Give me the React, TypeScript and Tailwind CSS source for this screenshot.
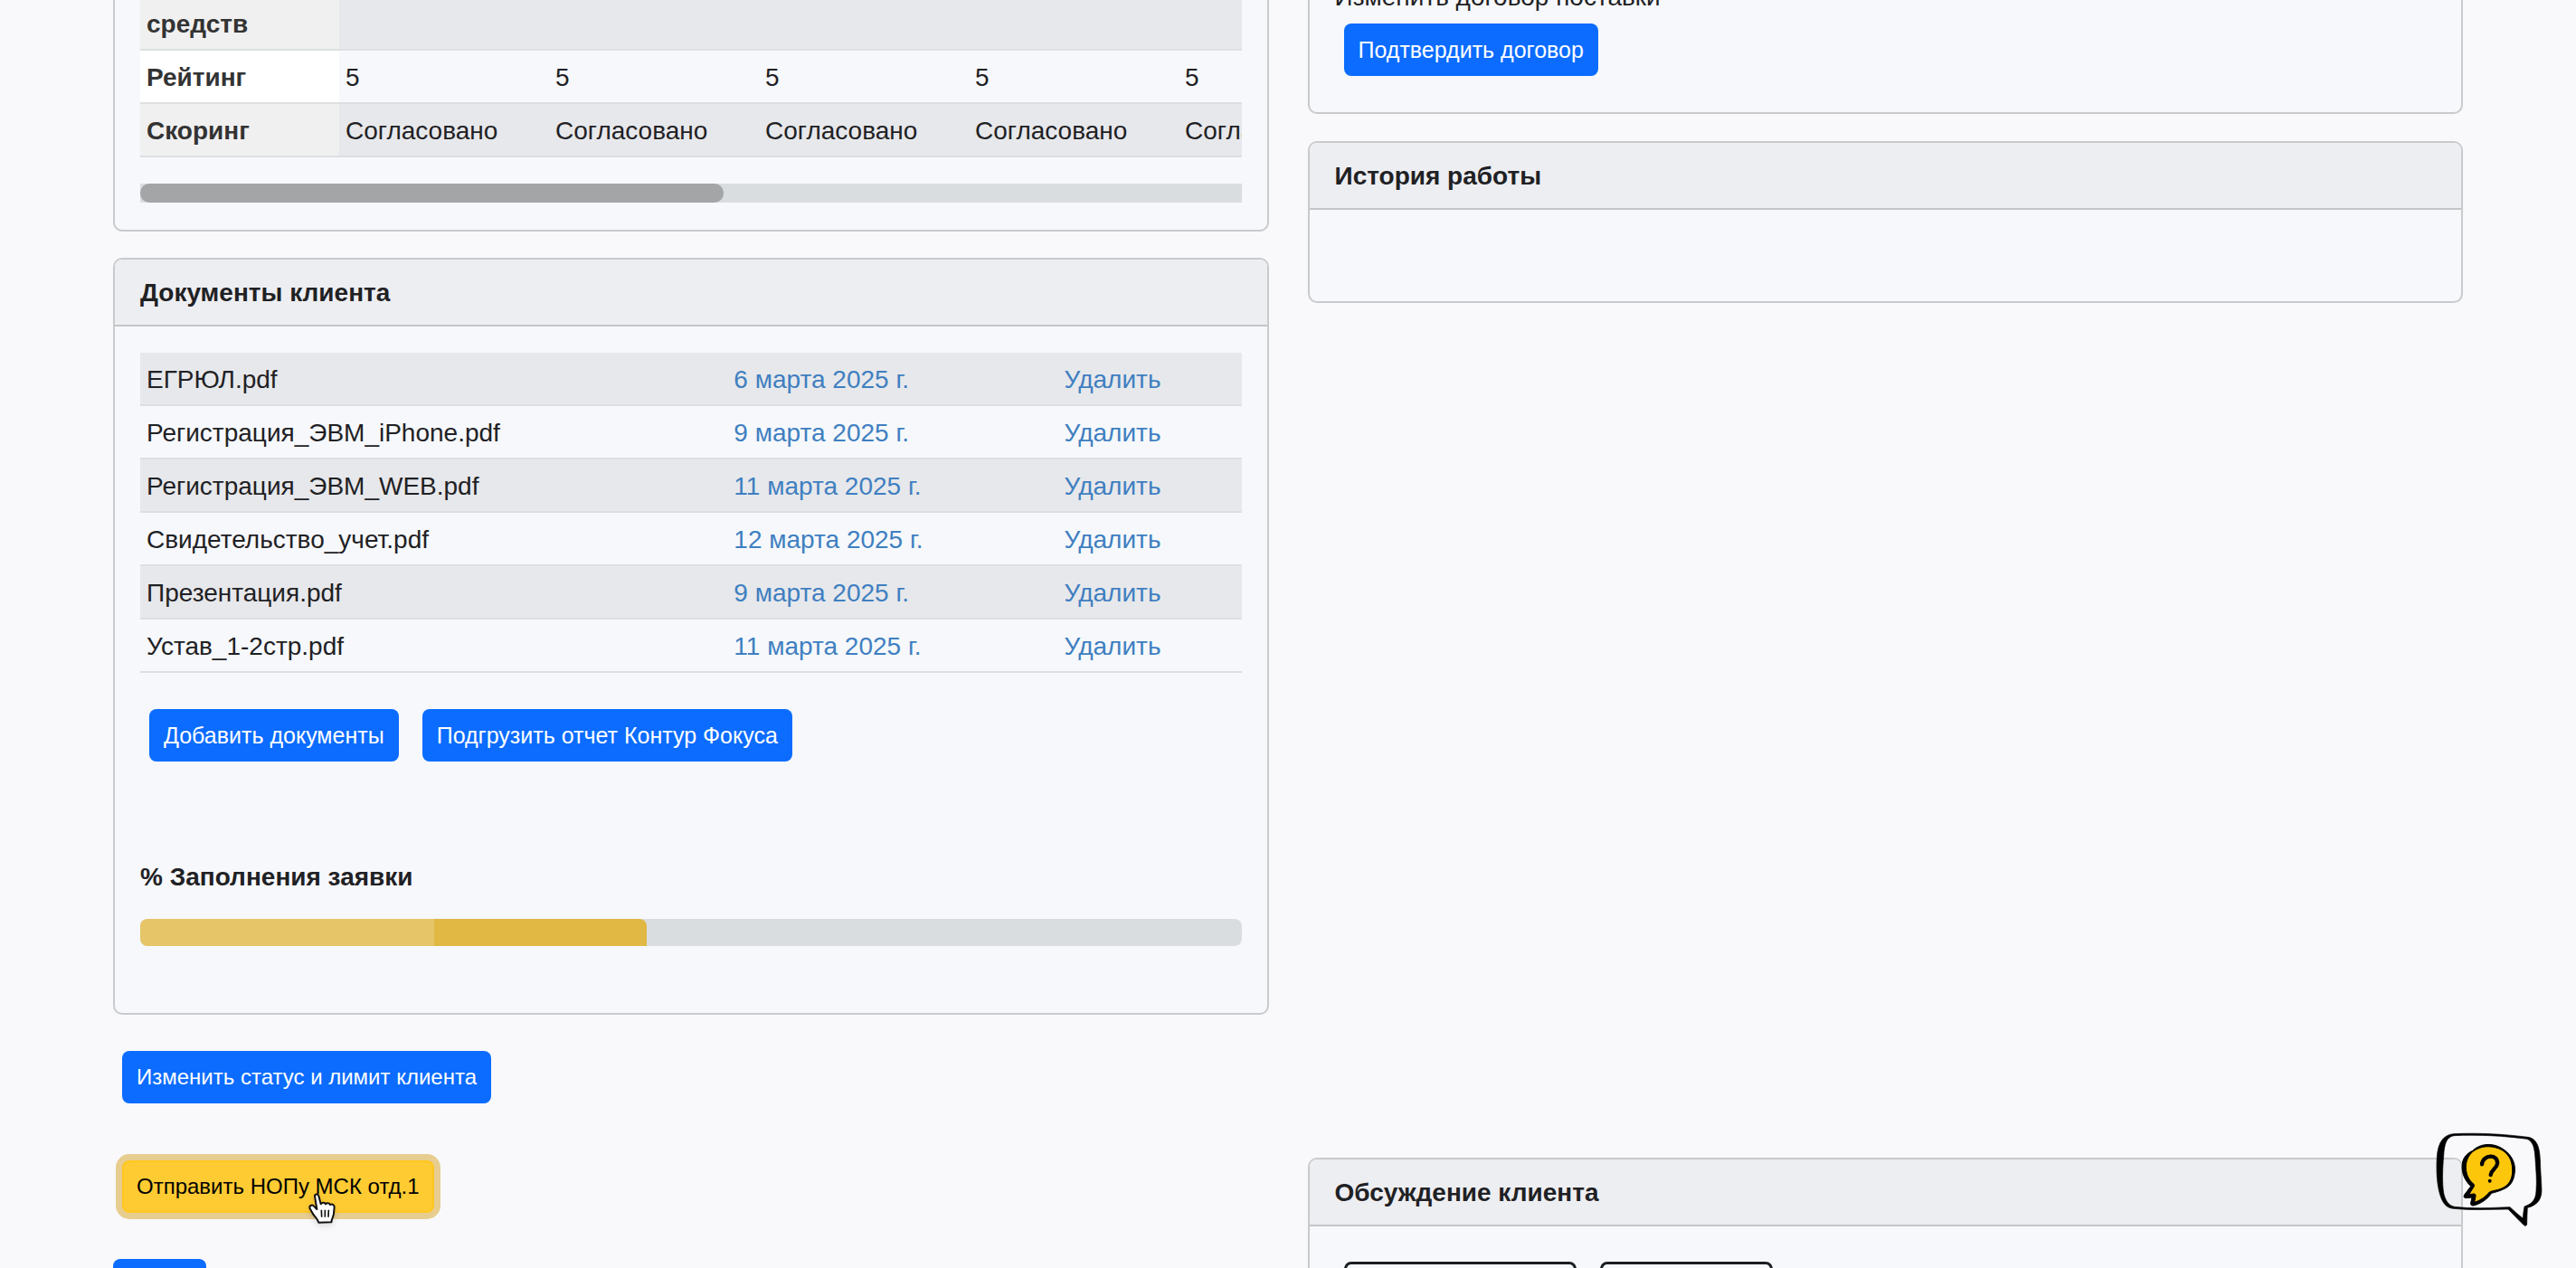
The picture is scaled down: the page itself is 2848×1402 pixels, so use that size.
import type { ReactNode } from "react";
import clsx from "clsx";

const documents = [
  { name: "ЕГРЮЛ.pdf", date: "6 марта 2025 г." },
  { name: "Регистрация_ЭВМ_iPhone.pdf", date: "9 марта 2025 г." },
  { name: "Регистрация_ЭВМ_WEB.pdf", date: "11 марта 2025 г." },
  { name: "Свидетельство_учет.pdf", date: "12 марта 2025 г." },
  { name: "Презентация.pdf", date: "9 марта 2025 г." },
  { name: "Устав_1-2стр.pdf", date: "11 марта 2025 г." },
];

const scoring = [
  { label: "средств", value: "", clipped: true },
  { label: "Рейтинг", value: "5" },
  { label: "Скоринг", value: "Согласовано" },
];

const periods = [1, 2, 3, 4, 5];
const filled = 46;

const cell = "border-b-2 border-[#dcdfe1] px-[7px] pt-2 pb-1.5 text-left";

function Card({ title, className, children }: { title?: string; className?: string; children?: ReactNode }) {
  return (
    <section className={clsx("overflow-hidden border-2 border-[#c8cacc] bg-[#f6f8fb]", className)}>
      {title && (
        <h2 className="border-b-2 border-[#c3c5c7] bg-[#edeef1] px-7 pt-[15px] pb-3.5 font-bold">{title}</h2>
      )}
      {children}
    </section>
  );
}

function PrimaryButton({ children, className = "text-[25px]" }: { children?: ReactNode; className?: string }) {
  return (
    <button
      type="button"
      className={clsx("h-[58px] rounded-lg bg-[#0b6cff] px-4 leading-[38px] text-white", className)}
    >
      {children}
    </button>
  );
}

function ScoringTable() {
  return (
    <>
      <div className="overflow-hidden">
        <table className="w-[1380px] table-fixed border-separate border-spacing-0">
          <tbody>
            {scoring.map((row, i) => (
              <tr key={row.label} className={i % 2 === 0 ? "bg-[#e7e8eb]" : ""}>
                <th
                  scope="row"
                  className={clsx(
                    cell,
                    "w-[220px] font-bold text-[#333]",
                    i % 2 === 0 ? "bg-[#f0f0f0]" : "bg-white",
                    row.clipped && "pt-[5px]"
                  )}
                >
                  {row.label}
                </th>
                {periods.map((p) => (
                  <td key={p} className={cell}>
                    {row.value}
                  </td>
                ))}
              </tr>
            ))}
          </tbody>
        </table>
      </div>
      <div className="mt-[29px] h-[21px] bg-[#dadde0]">
        <div className="h-full w-[53%] rounded-[10px] bg-[#a4a5a7]" />
      </div>
    </>
  );
}

function DocumentsTable() {
  return (
    <table className="w-full table-fixed border-separate border-spacing-0">
      <tbody>
        {documents.map((doc, i) => (
          <tr key={doc.name} className={i % 2 === 0 ? "bg-[#e7e8eb]" : ""}>
            <td className={clsx(cell, "w-8/15")}>{doc.name}</td>
            <td className={clsx(cell, "w-3/10")}>
              <a href="#" className="text-[#3f7fc1]">{doc.date}</a>
            </td>
            <td className={cell}>
              <a href="#" className="text-[#3f7fc1]">Удалить</a>
            </td>
          </tr>
        ))}
      </tbody>
    </table>
  );
}

function HandCursor() {
  return (
    <svg viewBox="0 0 90 102" className="absolute top-9 left-[206px] h-[34px] w-[30px] drop-shadow-md" aria-hidden="true">
      <path
        d="M21 11C21 3 32 2 34 10L41 37C45 31 54 31 57 37C61 32 69 33 72 39C78 36 86 39 86 47L84 68C83 80 77 84 76 97L34 98C31 85 18 77 13 66L4 50C3 41 14 38 18 44L28 54Z"
        fill="#fff"
        stroke="#111"
        strokeWidth="6"
        strokeLinejoin="round"
      />
      <path d="M43 56L44 80M55 56L55 80M67 56L66 80" stroke="#111" strokeWidth="5" />
    </svg>
  );
}

function HelpWidget() {
  return (
    <button type="button" aria-label="Помощь" className="fixed right-[33px] bottom-[42px] h-[115px] w-[130px]">
      <svg viewBox="0 0 390 345" className="h-full w-full" aria-hidden="true">
        <path
          fillRule="evenodd"
          stroke="#000"
          strokeWidth="2"
          d="M82 26C170 22 250 27 330 37C358 41 368 68 370 110C371 150 374 180 375 212C375 248 356 264 328 271C327 290 326 308 326 326C325 332 319 332 315 328C298 311 281 294 264 276C200 277 140 280 82 274C58 272 46 254 38 228C28 195 25 150 28 102C31 54 50 29 82 26ZM84 32C60 36 52 58 50 100C46 145 45 190 50 222C55 246 66 264 86 268C145 275 205 271 270 269C286 283 300 297 313 306C314 294 315 280 318 267C342 259 356 246 357 214C360 178 356 145 354 110C352 72 346 50 326 43C250 33 170 28 84 32Z"
        />
        <path
          d="M147 196C120 172 117 140 125 112C134 82 166 64 200 64C248 66 279 98 280 142C280 174 272 190 258 202C242 215 222 219 205 222C192 238 172 252 148 258L152 228L126 232Z"
          fill="#fcc70a"
        />
        <path
          fillRule="evenodd"
          stroke="#000"
          strokeWidth="3"
          strokeLinejoin="round"
          d="M146 82C170 58 208 56 236 70C272 88 289 120 286 150C284 180 273 198 252 208C234 217 219 220 209 223C196 242 174 258 149 264C142 265 139 261 140 255L144 237L123 239C117 239 116 233 119 228L140 200C117 178 108 150 112 124C115 104 128 90 146 82ZM148 84C132 97 124 116 124 136C124 160 133 179 150 193C153 196 152 199 150 202L134 227L150 225C155 225 157 228 156 233L152 253C172 247 188 236 202 219C212 213 232 214 250 203C268 193 278 175 278 148C279 112 262 86 233 75C202 64 174 66 148 84Z"
        />
        <path
          d="M177 127C181 93 231 92 228 125C226 141 208 144 206 162"
          fill="none"
          stroke="#000"
          strokeWidth="13"
          strokeLinecap="round"
        />
        <circle cx="203" cy="182" r="6" />
      </svg>
    </button>
  );
}

export default function App() {
  return (
    <div className="flex h-screen gap-[43px] overflow-hidden bg-[#f9f9fb] px-[125px] font-['Liberation_Sans',Arial,sans-serif] text-[28px] leading-[43px] text-[#1f2124]">
      <main className="flex min-w-0 flex-1 flex-col items-start">
        <Card className="w-full shrink-0 rounded-b-[10px] border-t-0 px-7 pb-[30px]">
          <ScoringTable />
        </Card>

        <Card title="Документы клиента" className="mt-[29px] w-full shrink-0 rounded-[10px]">
          <div className="px-7 pt-[29px] pb-[74px]">
            <DocumentsTable />
            <div className="mt-10 flex gap-[26px] px-2.5">
              <PrimaryButton>Добавить документы</PrimaryButton>
              <PrimaryButton>Подгрузить отчет Контур Фокуса</PrimaryButton>
            </div>
            <h3 id="progress-title" className="mt-[106px] font-bold">% Заполнения заявки</h3>
            <div
              role="progressbar"
              aria-labelledby="progress-title"
              aria-valuenow={filled}
              className="mt-[25px] h-[30px] overflow-hidden rounded-lg bg-[#dadde0]"
            >
              <div
                className="h-full rounded-tr-lg bg-[linear-gradient(to_right,#e6c468_58%,#e0b843_58%)]"
                style={{ width: `${filled}%` }}
              />
            </div>
          </div>
        </Card>

        <PrimaryButton className="mt-10 ml-2.5 shrink-0 text-[24px]">Изменить статус и лимит клиента</PrimaryButton>

        <div className="relative mt-[63px] ml-2.5 shrink-0">
          <button
            type="button"
            className="block h-[58px] rounded-lg border-2 border-[#ffc720] bg-[#fecb33] px-3.5 text-[24px] leading-[38px] text-black ring-7 ring-[#e8cd90]"
          >
            Отправить НОПу МСК отд.1
          </button>
          <HandCursor />
        </div>

        <PrimaryButton className="mt-[51px] w-[103px] shrink-0" />
      </main>

      <aside className="flex min-w-0 flex-1 flex-col">
        <Card className="rounded-b-[10px] border-t-0 px-7 pb-10">
          <p className="-mt-[25px]">Изменить договор поставки</p>
          <PrimaryButton className="mt-2 ml-2.5 text-[25px]">Подтвердить договор</PrimaryButton>
        </Card>

        <Card title="История работы" className="mt-[30px] rounded-[10px]">
          <div className="h-[101px]" />
        </Card>

        <Card title="Обсуждение клиента" className="mt-auto h-[122px] rounded-t-[10px] border-b-0">
          <div className="flex gap-[26px] px-[38px] pt-[39px]">
            <button type="button" aria-label="Комментарий" className="h-[58px] w-[257px] rounded-lg border-3 border-[#1c1f22]" />
            <button type="button" aria-label="Файл" className="h-[58px] w-[191px] rounded-lg border-3 border-[#1c1f22]" />
          </div>
        </Card>
      </aside>

      <HelpWidget />
    </div>
  );
}
